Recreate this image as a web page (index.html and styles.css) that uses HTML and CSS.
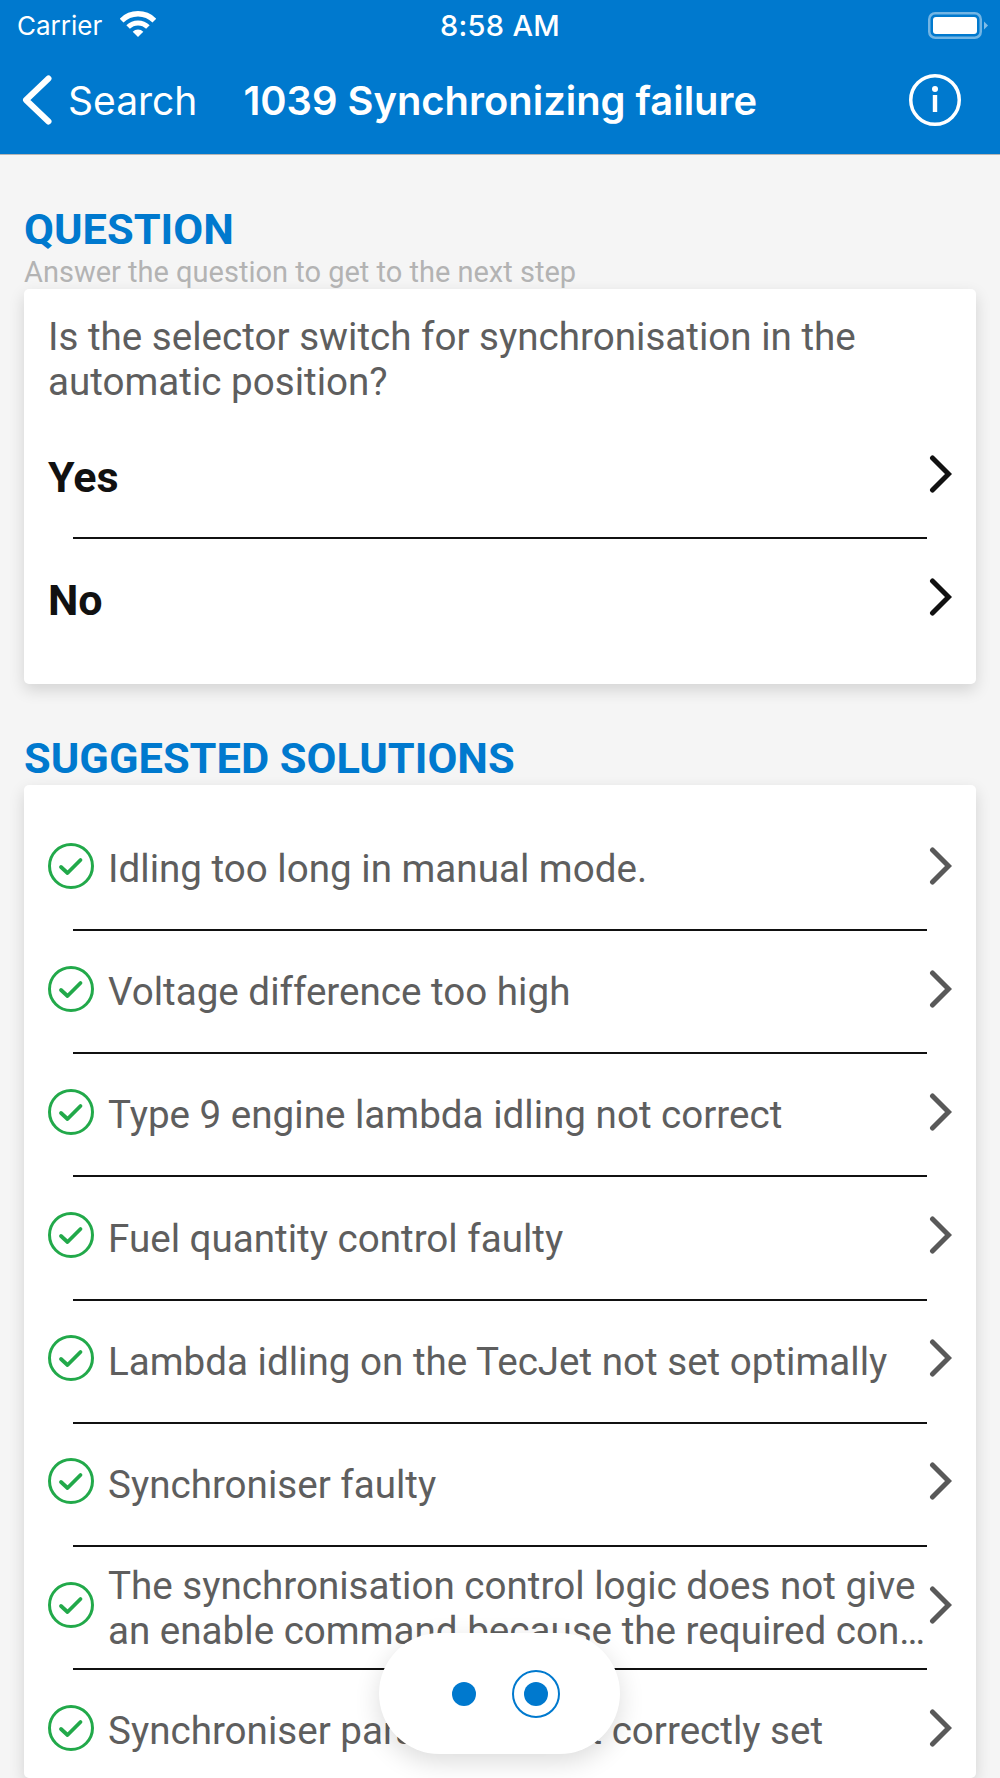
FILE: index.html
```html
<!DOCTYPE html>
<html lang="en">
<head>
<meta charset="utf-8">
<title>1039 Synchronizing failure</title>
<link rel="stylesheet" href="styles.css">
</head>
<body>
<svg class="defs" width="0" height="0" aria-hidden="true">
  <defs>
    <symbol id="check" viewBox="0 0 46 46">
      <circle cx="23" cy="23" r="21.5" fill="none" stroke="#22a94a" stroke-width="3"/>
      <path d="M13 24 L19.5 30 L32.5 17" fill="none" stroke="#22a94a" stroke-width="3.8" stroke-linecap="round" stroke-linejoin="round"/>
    </symbol>
    <symbol id="chev" viewBox="0 0 24 38">
      <path d="M4.5 3 L20.5 19 L4.5 35" fill="none" stroke="currentColor" stroke-width="5" stroke-linecap="round" stroke-linejoin="miter"/>
    </symbol>
  </defs>
</svg>
<header class="appbar">
  <div class="status">
    <div class="status-left">
      <span>Carrier</span>
      <svg class="wifi" viewBox="0 0 36 26" aria-hidden="true">
        <path d="M18 26 L12.7 20.7 A7.5 7.5 0 0 1 23.3 20.7 Z" fill="#fff"/>
        <path d="M8.1 16.1 A14 14 0 0 1 27.9 16.1" fill="none" stroke="#fff" stroke-width="5"/>
        <path d="M1.6 9.6 A23.2 23.2 0 0 1 34.4 9.6" fill="none" stroke="#fff" stroke-width="5.4"/>
      </svg>
    </div>
    <div class="status-time">8:58 AM</div>
    <svg class="battery" viewBox="0 0 61 27" aria-hidden="true">
      <rect x="1.25" y="1.25" width="51.5" height="24.5" rx="6" fill="none" stroke="#fff" stroke-opacity=".45" stroke-width="2.5"/>
      <rect x="5" y="5" width="44" height="17" rx="3" fill="#fff"/>
      <path d="M56 9.5 L60 13.5 L56 17.5 Z" fill="#fff" fill-opacity=".5"/>
    </svg>
  </div>
  <nav class="navbar">
    <svg class="back" viewBox="0 0 30 50" aria-hidden="true">
      <path d="M26.5 3.5 L4 25 L26.5 46.5" fill="none" stroke="#fff" stroke-width="6" stroke-linecap="round" stroke-linejoin="round"/>
    </svg>
    <span class="back-label">Search</span>
    <span class="nav-title">1039 Synchronizing failure</span>
    <svg class="info" viewBox="0 0 52 52" aria-hidden="true">
      <circle cx="26" cy="26" r="24.25" fill="none" stroke="#fff" stroke-width="3.5"/>
      <circle cx="26" cy="15" r="3" fill="#fff"/>
      <rect x="23.8" y="21" width="4.4" height="17" fill="#fff"/>
    </svg>
  </nav>
</header>
<main class="content">
  <section class="section-question">
    <h2 class="section-title">QUESTION</h2>
    <p class="hint">Answer the question to get to the next step</p>
    <div class="card">
      <p class="question">Is the selector switch for synchronisation in the automatic position?</p>
      <ul class="rows answers">
        <li class="row"><span class="answer">Yes</span><svg class="chev"><use href="#chev"/></svg></li>
        <li class="row"><span class="answer">No</span><svg class="chev"><use href="#chev"/></svg></li>
      </ul>
    </div>
  </section>
  <section class="section-solutions">
    <h2 class="section-title">SUGGESTED SOLUTIONS</h2>
    <div class="card card-list">
      <ul class="rows solutions">
        <li class="row"><svg class="check"><use href="#check"/></svg><span class="label">Idling too long in manual mode.</span><svg class="chev"><use href="#chev"/></svg></li>
        <li class="row"><svg class="check"><use href="#check"/></svg><span class="label">Voltage difference too high</span><svg class="chev"><use href="#chev"/></svg></li>
        <li class="row"><svg class="check"><use href="#check"/></svg><span class="label">Type 9 engine lambda idling not correct</span><svg class="chev"><use href="#chev"/></svg></li>
        <li class="row"><svg class="check"><use href="#check"/></svg><span class="label">Fuel quantity control faulty</span><svg class="chev"><use href="#chev"/></svg></li>
        <li class="row"><svg class="check"><use href="#check"/></svg><span class="label">Lambda idling on the TecJet not set optimally</span><svg class="chev"><use href="#chev"/></svg></li>
        <li class="row"><svg class="check"><use href="#check"/></svg><span class="label">Synchroniser faulty</span><svg class="chev"><use href="#chev"/></svg></li>
        <li class="row"><svg class="check"><use href="#check"/></svg><span class="label">The synchronisation control logic does not give an enable command because the required con…</span><svg class="chev"><use href="#chev"/></svg></li>
        <li class="row"><svg class="check"><use href="#check"/></svg><span class="label">Synchroniser parameters not correctly set</span><svg class="chev"><use href="#chev"/></svg></li>
      </ul>
    </div>
  </section>
</main>
<div class="pager" aria-hidden="true">
  <span class="dot"></span>
  <span class="dot-ring"><span class="dot"></span></span>
</div>
</body>
</html>
```
FILE: styles.css
```css
* { box-sizing: border-box; }
html, body { margin: 0; padding: 0; }
body {
  position: relative;
  width: 1000px;
  height: 1778px;
  overflow: hidden;
  background: #f5f5f5;
  font-family: Roboto, "Liberation Sans", sans-serif;
  color: #5e5e5e;
}
.defs { position: absolute; }
.appbar {
  height: 155px;
  background: #0079ce;
  border-bottom: 1px solid #b5b5b5;
  color: #fff;
  font-family: Inter, "Liberation Sans", sans-serif;
}
.status {
  display: grid;
  grid-template-columns: 1fr auto 1fr;
  align-items: center;
  height: 50px;
  padding: 0 11px 0 17px;
  font-size: 26px;
}
.status-left { display: flex; align-items: center; gap: 18px; }
.wifi { width: 36px; height: 26px; margin-top: -2px; }
.status-time { font-size: 29px; font-weight: 500; letter-spacing: .3px; margin-left: -6px; }
.battery { width: 61px; height: 27px; justify-self: end; }
.navbar {
  display: flex;
  align-items: center;
  height: 104px;
  padding: 0 0 4px 22px;
}
.back { width: 30px; height: 50px; flex: none; }
.back-label { margin-left: 16px; font-size: 39px; }
.nav-title { margin-left: 46px; font-size: 39.9px; font-weight: 600; }
.info { width: 52px; height: 52px; margin-left: auto; margin-right: 39px; }
.content { padding: 0 24px; }
.section-title {
  margin: 0;
  font-size: 43.4px;
  line-height: 48px;
  font-weight: 700;
  color: #0079ce;
}
.section-question { padding-top: 51px; }
.hint {
  margin: 0;
  height: 35px;
  font-size: 29px;
  line-height: 36px;
  color: #b3b3b3;
}
.card {
  background: #fff;
  border-radius: 5px;
  box-shadow: 0 6px 16px rgba(0, 0, 0, .14);
}
.section-question .card { height: 395px; padding-top: 25px; }
.question {
  margin: 0;
  padding: 0 24px;
  font-size: 38.6px;
  line-height: 45px;
}
.section-solutions { padding-top: 51px; }
.card-list { height: 993px; padding-top: 23px; margin-top: 2px; overflow: hidden; }
.rows { list-style: none; margin: 0; padding: 0; }
.answers { margin-top: 12px; }
.row {
  position: relative;
  display: flex;
  align-items: center;
  height: 123.17px;
  padding: 0 24px 8px 24px;
}
.row::after {
  content: "";
  position: absolute;
  left: 49px;
  right: 49px;
  bottom: 0;
  height: 2px;
  background: #111;
}
.answers .row:last-child::after, .solutions .row:last-child::after { display: none; }
.answer { margin-top: 6px; font-size: 43px; font-weight: 700; color: #111; }
.check { width: 46px; height: 46px; flex: none; margin-right: 14px; }
.label {
  flex: 1;
  min-width: 0;
  margin-top: 6px;
  margin-right: -4px;
  font-size: 38.6px;
  line-height: 45px;
}
.chev { width: 24px; height: 38px; flex: none; margin-left: auto; color: #595959; }
.answers .chev { color: #111; }
.pager {
  position: absolute;
  left: 379px;
  top: 1633px;
  width: 241px;
  height: 121px;
  display: flex;
  align-items: center;
  justify-content: center;
  gap: 36px;
  padding-left: 12px;
  background: #fff;
  border-radius: 60.5px;
  box-shadow: 0 8px 26px rgba(0, 0, 0, .14);
}
.dot {
  width: 24px;
  height: 24px;
  border-radius: 50%;
  background: #0079ce;
}
.dot-ring {
  display: flex;
  align-items: center;
  justify-content: center;
  width: 48px;
  height: 48px;
  border: 2px solid #0079ce;
  border-radius: 50%;
}
```
